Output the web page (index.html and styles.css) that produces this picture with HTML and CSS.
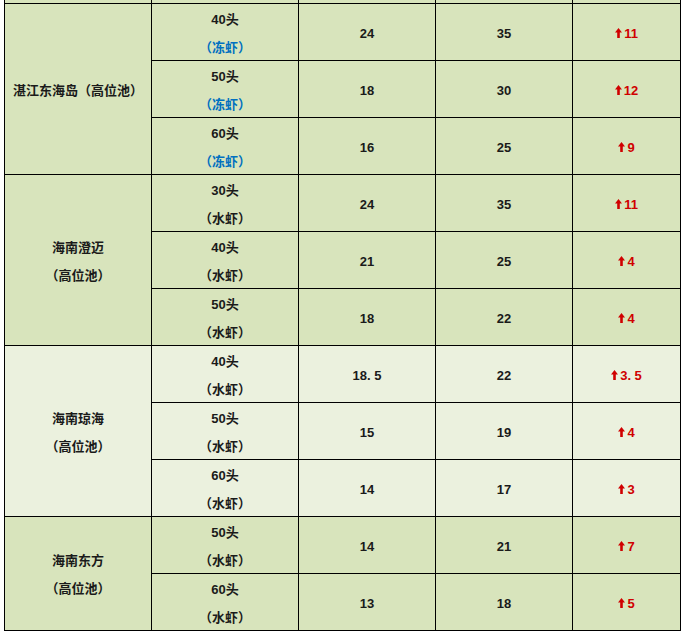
FILE: index.html
```html
<!DOCTYPE html>
<html lang="zh-CN">
<head>
<meta charset="utf-8">
<title>虾价表</title>
<link rel="stylesheet" href="styles.css">
</head>
<body>
<div class="sheet">
  <!-- cut-off previous row -->
  <div class="cell dark cut"></div>
  <div class="cell dark cut"></div>
  <div class="cell dark cut"></div>
  <div class="cell dark cut"></div>
  <div class="cell dark cut"></div>

  <!-- 湛江东海岛 -->
  <div class="cell dark region span3">湛江东海岛（高位池）</div>
  <div class="cell dark"><span>40头</span><span class="blue">（冻虾）</span></div>
  <div class="cell dark">24</div>
  <div class="cell dark">35</div>
  <div class="cell dark up"><svg class="arrow" viewBox="0 0 7 10"><polygon points="3.5,0 7,4.4 4.8,4.4 4.8,10 2.2,10 2.2,4.4 0,4.4"/></svg>11</div>

  <div class="cell dark"><span>50头</span><span class="blue">（冻虾）</span></div>
  <div class="cell dark">18</div>
  <div class="cell dark">30</div>
  <div class="cell dark up"><svg class="arrow" viewBox="0 0 7 10"><polygon points="3.5,0 7,4.4 4.8,4.4 4.8,10 2.2,10 2.2,4.4 0,4.4"/></svg>12</div>

  <div class="cell dark"><span>60头</span><span class="blue">（冻虾）</span></div>
  <div class="cell dark">16</div>
  <div class="cell dark">25</div>
  <div class="cell dark up"><svg class="arrow" viewBox="0 0 7 10"><polygon points="3.5,0 7,4.4 4.8,4.4 4.8,10 2.2,10 2.2,4.4 0,4.4"/></svg>9</div>

  <!-- 海南澄迈 -->
  <div class="cell dark region span3"><span>海南澄迈</span><span>（高位池）</span></div>
  <div class="cell dark"><span>30头</span><span>（水虾）</span></div>
  <div class="cell dark">24</div>
  <div class="cell dark">35</div>
  <div class="cell dark up"><svg class="arrow" viewBox="0 0 7 10"><polygon points="3.5,0 7,4.4 4.8,4.4 4.8,10 2.2,10 2.2,4.4 0,4.4"/></svg>11</div>

  <div class="cell dark"><span>40头</span><span>（水虾）</span></div>
  <div class="cell dark">21</div>
  <div class="cell dark">25</div>
  <div class="cell dark up"><svg class="arrow" viewBox="0 0 7 10"><polygon points="3.5,0 7,4.4 4.8,4.4 4.8,10 2.2,10 2.2,4.4 0,4.4"/></svg>4</div>

  <div class="cell dark"><span>50头</span><span>（水虾）</span></div>
  <div class="cell dark">18</div>
  <div class="cell dark">22</div>
  <div class="cell dark up"><svg class="arrow" viewBox="0 0 7 10"><polygon points="3.5,0 7,4.4 4.8,4.4 4.8,10 2.2,10 2.2,4.4 0,4.4"/></svg>4</div>

  <!-- 海南琼海 -->
  <div class="cell light region span3"><span>海南琼海</span><span>（高位池）</span></div>
  <div class="cell light"><span>40头</span><span>（水虾）</span></div>
  <div class="cell light">18. 5</div>
  <div class="cell light">22</div>
  <div class="cell light up"><svg class="arrow" viewBox="0 0 7 10"><polygon points="3.5,0 7,4.4 4.8,4.4 4.8,10 2.2,10 2.2,4.4 0,4.4"/></svg>3. 5</div>

  <div class="cell light"><span>50头</span><span>（水虾）</span></div>
  <div class="cell light">15</div>
  <div class="cell light">19</div>
  <div class="cell light up"><svg class="arrow" viewBox="0 0 7 10"><polygon points="3.5,0 7,4.4 4.8,4.4 4.8,10 2.2,10 2.2,4.4 0,4.4"/></svg>4</div>

  <div class="cell light"><span>60头</span><span>（水虾）</span></div>
  <div class="cell light">14</div>
  <div class="cell light">17</div>
  <div class="cell light up"><svg class="arrow" viewBox="0 0 7 10"><polygon points="3.5,0 7,4.4 4.8,4.4 4.8,10 2.2,10 2.2,4.4 0,4.4"/></svg>3</div>

  <!-- 海南东方 -->
  <div class="cell dark region span2"><span>海南东方</span><span>（高位池）</span></div>
  <div class="cell dark"><span>50头</span><span>（水虾）</span></div>
  <div class="cell dark">14</div>
  <div class="cell dark">21</div>
  <div class="cell dark up"><svg class="arrow" viewBox="0 0 7 10"><polygon points="3.5,0 7,4.4 4.8,4.4 4.8,10 2.2,10 2.2,4.4 0,4.4"/></svg>7</div>

  <div class="cell dark"><span>60头</span><span>（水虾）</span></div>
  <div class="cell dark">13</div>
  <div class="cell dark">18</div>
  <div class="cell dark up"><svg class="arrow" viewBox="0 0 7 10"><polygon points="3.5,0 7,4.4 4.8,4.4 4.8,10 2.2,10 2.2,4.4 0,4.4"/></svg>5</div>
</div>
</body>
</html>
```

FILE: styles.css
```css
html, body {
  margin: 0;
  padding: 0;
  background: #ffffff;
}

body {
  padding-left: 4px;
  font-family: "Liberation Sans", "Noto Sans CJK SC", sans-serif;
  font-size: 13px;
  font-weight: bold;
  color: #1a1a1a;
}

.sheet {
  display: grid;
  width: 677px;
  box-sizing: border-box;
  grid-template-columns: 146px 146px 136px 136px 107px;
  grid-template-rows: 3px repeat(11, 56px);
  gap: 1px;
  padding: 0 1px 1px 1px;
  background: #000000;
}

.cell {
  display: flex;
  flex-direction: column;
  align-items: center;
  justify-content: center;
  box-sizing: border-box;
  padding-top: 3px;
  line-height: 28px;
  text-align: center;
  white-space: nowrap;
}

.cut {
  padding-top: 0;
  line-height: 0;
}

.dark {
  background: #d8e4bc;
}

.light {
  background: #ebf1de;
}

.region {
  grid-column: 1;
}

.span3 {
  grid-row: span 3;
}

.span2 {
  grid-row: span 2;
}

.blue {
  color: #0070c0;
}

.up {
  flex-direction: row;
  color: #d00000;
}

.arrow {
  width: 7px;
  height: 10px;
  margin-right: 2px;
  margin-top: -1px;
  fill: #d00000;
}
```
